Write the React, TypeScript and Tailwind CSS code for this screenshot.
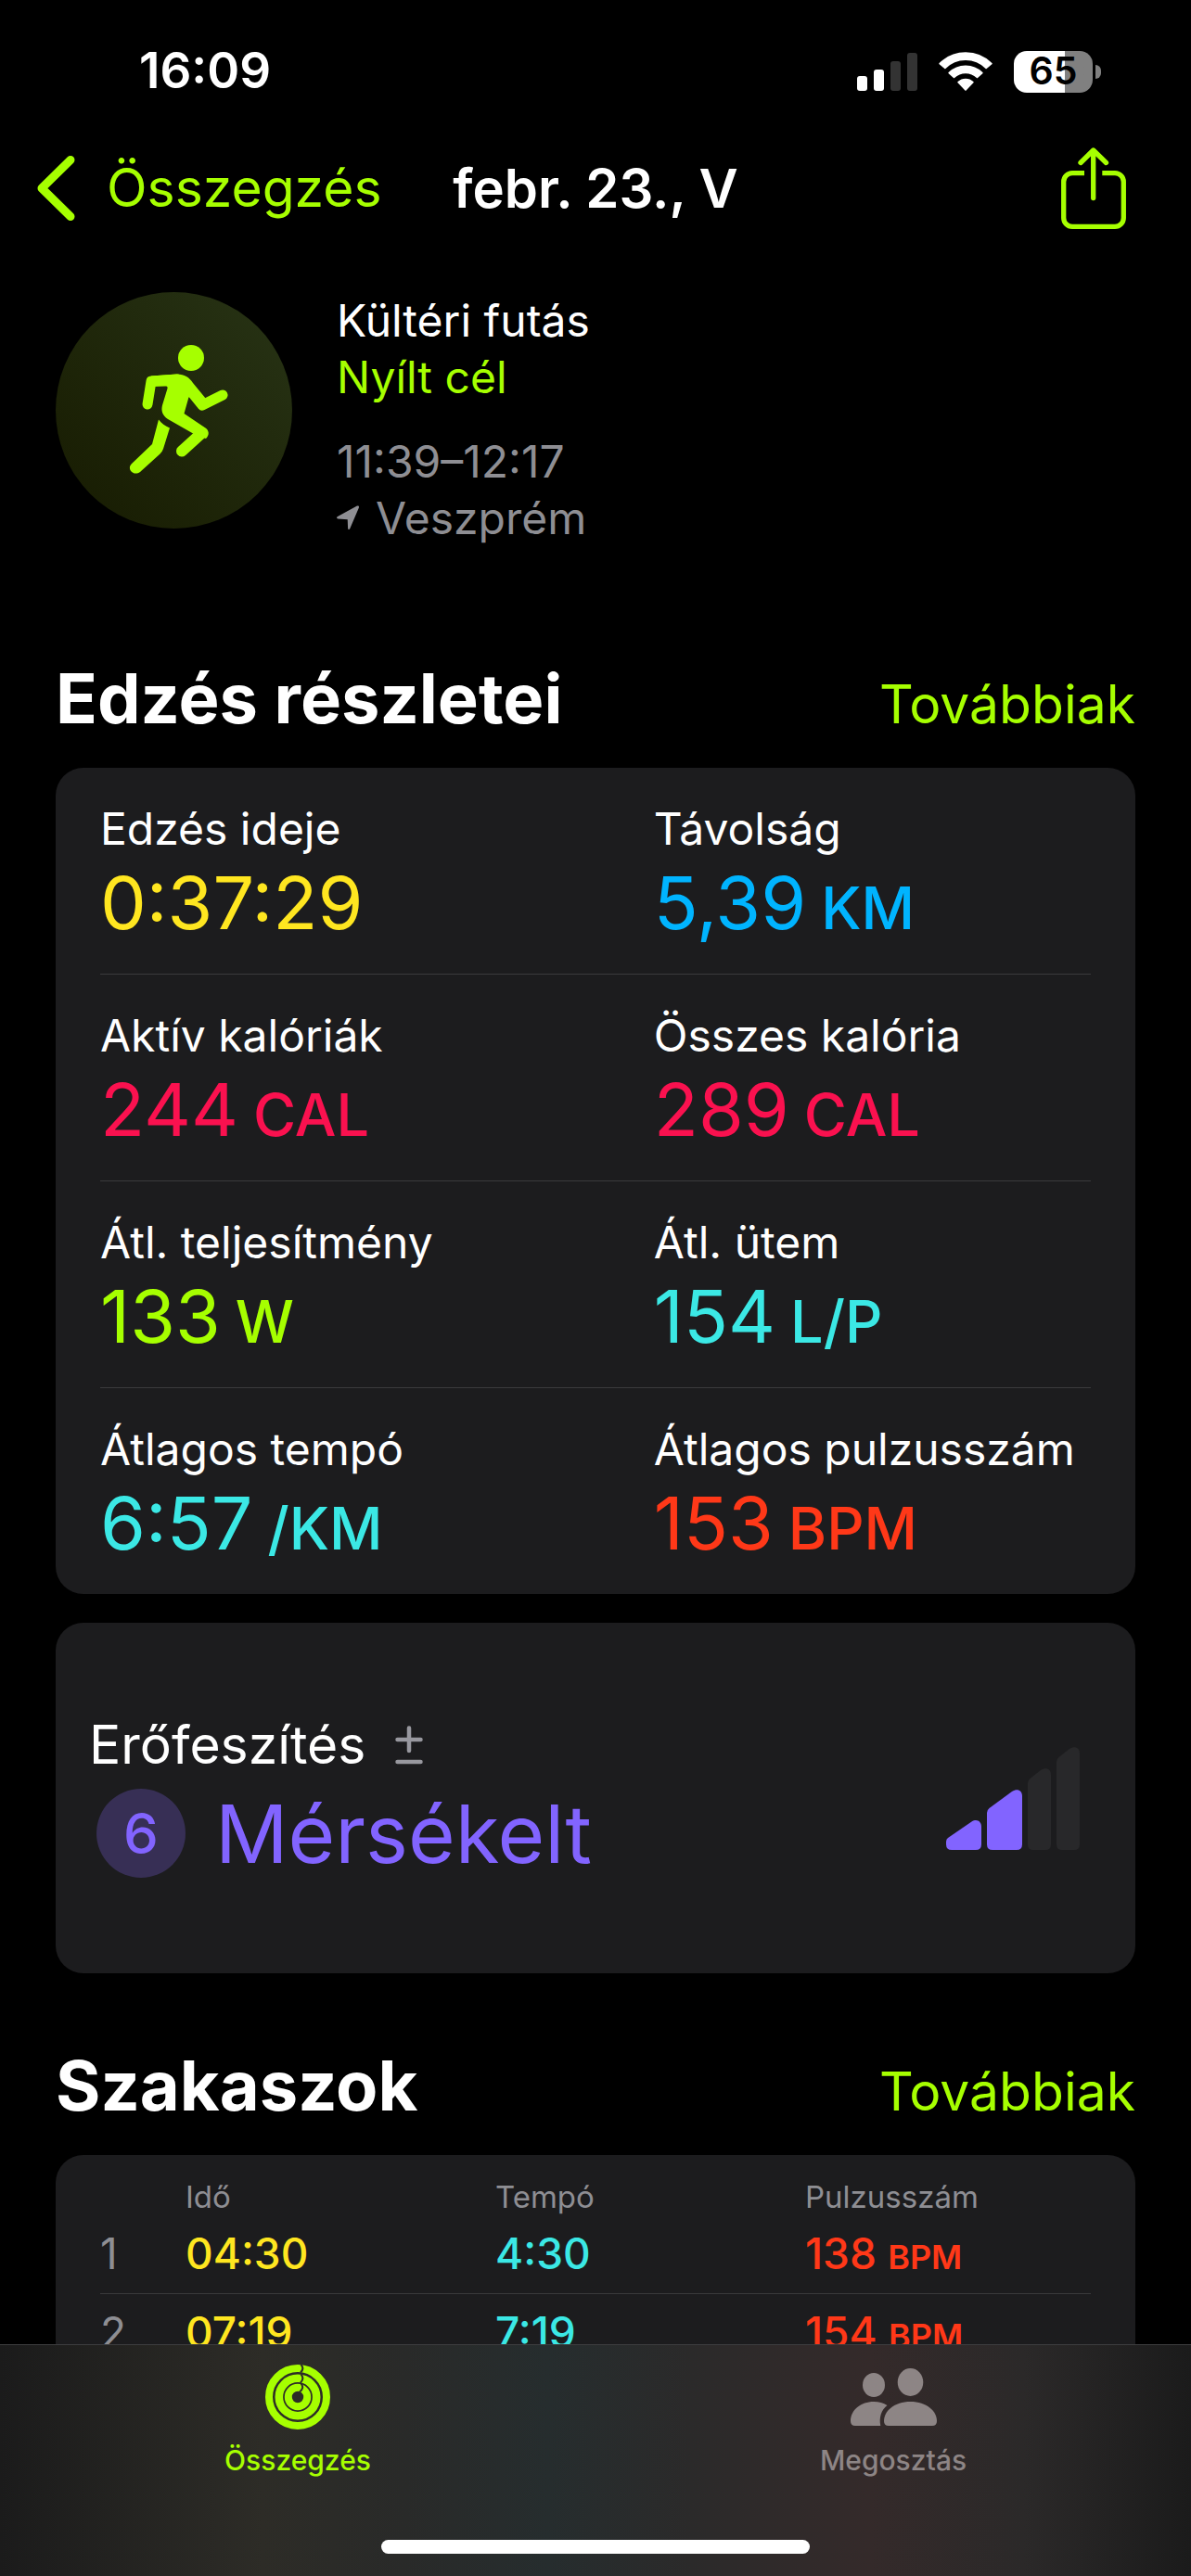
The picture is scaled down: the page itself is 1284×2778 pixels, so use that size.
import type { ReactNode } from 'react';

type Metric = {
  label: string;
  value: string;
  unit?: string;
  color: string;
};

const metrics: Metric[] = [
  { label: 'Edzés ideje', value: '0:37:29', color: 'text-[#ffe620]' },
  { label: 'Távolság', value: '5,39', unit: 'KM', color: 'text-[#00b4ff]' },
  { label: 'Aktív kalóriák', value: '244', unit: 'CAL', color: 'text-[#fa114f]' },
  { label: 'Összes kalória', value: '289', unit: 'CAL', color: 'text-[#fa114f]' },
  { label: 'Átl. teljesítmény', value: '133', unit: 'W', color: 'text-[#a6ff00]' },
  { label: 'Átl. ütem', value: '154', unit: 'L/P', color: 'text-[#3be8e5]' },
  { label: 'Átlagos tempó', value: '6:57', unit: '/KM', color: 'text-[#3be8e5]' },
  { label: 'Átlagos pulzusszám', value: '153', unit: 'BPM', color: 'text-[#ff3818]' },
];

const splits = [
  { time: '04:30', pace: '4:30', pulse: '138' },
  { time: '07:19', pace: '7:19', pulse: '154' },
];

function SignalIcon() {
  return (
    <svg className="h-[41px] w-[65px]" viewBox="0 0 65 41" fill="#fff">
      <rect x="0" y="25" width="11" height="16" rx="3" />
      <rect x="18" y="18" width="11" height="23" rx="3" />
      <rect x="36" y="9" width="11" height="32" rx="3" fill="#333" />
      <rect x="54" y="0" width="11" height="41" rx="3" fill="#333" />
    </svg>
  );
}

function WifiIcon() {
  return (
    <svg
      className="h-[42px] w-[58px]"
      viewBox="338 72 173 126"
      fill="#fff"
      stroke="#fff"
      strokeWidth="5"
      strokeLinejoin="round"
    >
      <path d="M341 110A118 118 0 0 1 508 110L491 124A94 94 0 0 0 358 124Z" />
      <path d="M371 140A76 76 0 0 1 478 140L462 154A55 55 0 0 0 387 154Z" />
      <path d="M401 170A34 34 0 0 1 448 170L424.500 195Z" />
    </svg>
  );
}

function Battery() {
  return (
    <div className="flex items-center gap-[3px]">
      <div className="flex h-[45px] w-[85px] items-center justify-center rounded-[14px] bg-linear-to-r from-white from-65% to-[#808080] to-65% text-[41px] font-semibold text-black">
        65
      </div>
      <div className="h-[15px] w-[6px] rounded-r-full bg-[#808080]" />
    </div>
  );
}

function ShareIcon() {
  return (
    <svg
      className="h-[88px] w-[70px]"
      viewBox="0 0 70 88"
      fill="none"
      stroke="currentColor"
      strokeWidth="5.300"
    >
      <path d="M25 27.700H12A9.300 9.300 0 0 0 2.700 37V76A9.300 9.300 0 0 0 12 85.300H58A9.300 9.300 0 0 0 67.300 76V37A9.300 9.300 0 0 0 58 27.700H44.300" />
      <path d="M34.700 4V54.500M21 16.500L34.700 3L48.500 16.500" strokeLinecap="round" strokeLinejoin="round" />
    </svg>
  );
}

function RunnerIcon() {
  return (
    <svg className="size-full" viewBox="0 0 255 255" fill="#a6ff00" stroke="#a6ff00" strokeLinecap="round" strokeLinejoin="round">
      <circle cx="146" cy="71" r="14" stroke="none" />
      <path d="M99 121L103 96L131 94" fill="none" strokeWidth="11" />
      <path d="M137 96L158 122L180 111" fill="none" strokeWidth="11" />
      <path
        d="M103 90.500L131 88.500C139 88.500 144 92 148 98L162 115L158 127L146 113C144.500 112 143.500 113 143 115L138.500 131L160 145.500C166 149 166 154 162 158L149 153L121 137C115 133 113.500 128 115 122L120.500 104C121 102 120 101.500 118 101.500L104 102Z"
        stroke="none"
      />
      <path d="M158 151.500L136 171.500" fill="none" strokeWidth="12" />
      <path d="M111 137.500C114 141.500 118 144.500 123 146.500L116 169Q115 172 112.500 174.500L91 194C84 199 76 191 82 185L104 164Z" stroke="none" />
    </svg>
  );
}

function LocationIcon() {
  return (
    <svg className="h-[27px] w-[24px]" viewBox="0 0 24 27" fill="currentColor">
      <path d="M1 12L22 .6C23.500 0 24.300 1 23.900 2.400L14.300 25C13.600 26.500 12.200 26.300 12.100 24.800L11.700 15.200L1.400 14.500C-.2 14.200-.3 12.700 1 12Z" />
    </svg>
  );
}

function PlusMinusIcon() {
  return (
    <svg className="h-[42px] w-[30px]" viewBox="0 0 30 42" stroke="#98989f" strokeWidth="4.500" strokeLinecap="round">
      <path d="M15 2.500V27M2.500 15H27.500M2.500 39H27.500" />
    </svg>
  );
}

function EffortBars() {
  return (
    <svg className="h-[111px] w-[144px]" viewBox="0 0 144 111">
      <g fill="#8264ff">
        <path d="M2 98L27.500 80.500C33 77 38 80 38 86V105Q38 111 32 111H6Q0 111 0 105V102Q0 99.500 2 98Z" />
        <path d="M46.500 66L71 48C77 44 82 47 82 53V105Q82 111 76 111H50Q44 111 44 105V71Q44 68 46.500 66Z" />
      </g>
      <g fill="#28282a">
        <path d="M90.500 34L102 25C108 21 113 24 113 30V105Q113 111 107 111H94Q88 111 88 105V39Q88 36 90.500 34Z" />
        <path d="M121.500 11L133 2C139-2 144 1 144 7V105Q144 111 138 111H125Q119 111 119 105V16Q119 13 121.500 11Z" />
      </g>
    </svg>
  );
}

function RingsIcon() {
  return (
    <svg className="size-[70px]" viewBox="0 0 70 70" fill="none">
      <g stroke="#a6ff00">
        <circle cx="35" cy="35" r="31" strokeWidth="8" />
        <circle cx="35" cy="35" r="20.200" strokeWidth="8.600" />
        <circle cx="35" cy="35" r="10.200" strokeWidth="8" />
      </g>
      <path
        d="M38.500 0Q42.500 4.500 38 8.500M38.500 10.500Q42.500 15 38 19.500M38.500 20.500Q42.500 25 37 29.500"
        stroke="#2c2c28"
        strokeWidth="2"
      />
    </svg>
  );
}

function PeopleIcon() {
  return (
    <svg className="h-[62px] w-[93px]" viewBox="0 0 93 62" fill="currentColor">
      <ellipse cx="25" cy="18" rx="12" ry="13" />
      <ellipse cx="64.500" cy="15" rx="13.800" ry="15" />
      <path d="M39.500 40C33 45 30.500 53 32.300 62H5Q0 62 0 57C0 45 11 36 25 36C30.500 36 35.500 37.500 39.500 40Z" />
      <path d="M41 62Q36 62 36 57C36 46 47 36 64.500 36C82 36 93 46 93 57Q93 62 88 62Z" />
    </svg>
  );
}

function SectionHeader({ title }: { title: string }) {
  return (
    <div className="mb-[29px] flex items-baseline justify-between">
      <h2 className="text-[74px] leading-[92px] font-bold">{title}</h2>
      <a href="#" className="text-[57px] leading-[72px] text-[#a6ff00]">
        Továbbiak
      </a>
    </div>
  );
}

function Card({ children, className = '' }: { children: ReactNode; className?: string }) {
  return <div className={`rounded-[30px] bg-[#1c1c1e] ${className}`}>{children}</div>;
}

function MetricCell({ label, value, unit, color }: Metric) {
  return (
    <div>
      <dt className="text-[48px] leading-[60px] whitespace-nowrap">{label}</dt>
      <dd className={`mt-1 text-[79px] leading-[90px] whitespace-nowrap ${color}`}>
        {value}
        {unit && <span className="ml-4 text-[63px] leading-none font-medium">{unit}</span>}
      </dd>
    </div>
  );
}

export default function App() {
  const rows = [0, 2, 4, 6].map((i) => metrics.slice(i, i + 2));

  return (
    <div className="flex h-screen flex-col bg-black font-['Inter',sans-serif] text-white">
      {/* Status bar */}
      <div className="flex h-[154px] shrink-0 items-center justify-between pr-[97px] pl-[150px]">
        <span className="text-[53px] font-semibold">16:09</span>
        <div className="flex items-center gap-[23px]">
          <SignalIcon />
          <WifiIcon />
          <Battery />
        </div>
      </div>

      {/* Navigation */}
      <header className="grid h-[98px] shrink-0 grid-cols-[1fr_auto_1fr] items-center px-10 text-[57px]">
        <button className="flex items-center gap-[34px] text-[#a6ff00]">
          <svg className="h-[70px] w-[41px]" viewBox="0 0 41 70" fill="none" stroke="currentColor" strokeWidth="9" strokeLinecap="round" strokeLinejoin="round">
            <path d="M36 4.500L5 35L36 65.500" />
          </svg>
          Összegzés
        </button>
        <h1 className="text-[58px] font-semibold">febr. 23., V</h1>
        <button className="mr-[30px] justify-self-end text-[#a6ff00]" aria-label="Megosztás">
          <ShareIcon />
        </button>
      </header>

      <main className="min-h-0 flex-1 overflow-hidden px-[60px] pt-[63px]">
        {/* Workout summary */}
        <section className="flex gap-12">
          <div className="size-[255px] rounded-full bg-linear-to-tr from-[#171b02] to-[#283416]">
            <RunnerIcon />
          </div>
          <div className="text-[48px] leading-[61px]">
            <p>Kültéri futás</p>
            <p className="text-[#a6ff00]">Nyílt cél</p>
            <p className="mt-[30px] text-[#8e8e93]">11:39–12:17</p>
            <p className="flex items-center gap-[18px] text-[#8e8e93]">
              <LocationIcon />
              Veszprém
            </p>
          </div>
        </section>

        <section className="mt-[118px]">
          <SectionHeader title="Edzés részletei" />
          <Card className="px-12">
            {rows.map((row) => (
              <dl
                key={row[0].label}
                className="grid grid-cols-[19fr_15fr] border-b border-[#3a3a3c] pt-9 pb-8 last:border-b-0"
              >
                {row.map((metric) => (
                  <MetricCell key={metric.label} {...metric} />
                ))}
              </dl>
            ))}
          </Card>
        </section>

        {/* Effort */}
        <Card className="mt-[31px] flex items-center justify-between py-24 pr-[60px] pl-9">
          <div>
            <div className="flex items-center gap-8 text-[57px] leading-[72px]">
              Erőfeszítés
              <PlusMinusIcon />
            </div>
            <div className="mt-1 flex h-[110px] items-center gap-8 pl-2 text-[#8264ff]">
              <span className="flex size-24 items-center justify-center rounded-full bg-[#372f55] text-[60px] font-medium">
                6
              </span>
              <span className="text-[87px] leading-none">Mérsékelt</span>
            </div>
          </div>
          <EffortBars />
        </Card>

        <section className="mt-[75px]">
          <SectionHeader title="Szakaszok" />
          <Card className="px-12 pt-6">
            <table className="w-full table-fixed text-left text-[46px] font-medium">
              <thead>
                <tr className="h-[41px] text-[33px] leading-10 text-[#8e8e93]">
                  <td className="w-[92px]" />
                  <th className="w-[334px] font-normal">Idő</th>
                  <th className="w-[334px] font-normal">Tempó</th>
                  <th className="font-normal">Pulzusszám</th>
                </tr>
              </thead>
              <tbody>
                {splits.map((split, i) => (
                  <tr key={split.time} className="h-[84px] border-b border-[#3a3a3c] last:border-b-0">
                    <td className="font-normal text-[#8e8e93]">{i + 1}</td>
                    <td className="text-[#ffe620]">{split.time}</td>
                    <td className="text-[#3be8e5]">{split.pace}</td>
                    <td className="whitespace-nowrap text-[#ff3818]">
                      {split.pulse} <span className="text-[36px] font-semibold">BPM</span>
                    </td>
                  </tr>
                ))}
              </tbody>
            </table>
          </Card>
        </section>
      </main>

      {/* Tab bar */}
      <nav className="flex shrink-0 flex-col items-center border-t border-[#3d3d3f] bg-[linear-gradient(to_right,#1b1b1b,#2d2c27_22%,#292a29_34%,#262d2e_46%,#2b2a2a_58%,#342a2a_73%,#2b2929_86%,#1b1b1b)] pt-[21px] pb-6">
        <div className="grid w-full grid-cols-2 text-[30px] leading-9 font-medium">
          <a href="#" className="flex flex-col items-center gap-[15px] text-[#a6ff00]">
            <RingsIcon />
            Összegzés
          </a>
          <a href="#" className="flex flex-col items-center gap-[15px] text-[#8d8585]">
            <span className="flex h-[70px] items-center">
              <PeopleIcon />
            </span>
            Megosztás
          </a>
        </div>
        <div className="mt-[68px] h-[15px] w-[36%] rounded-full bg-white" />
      </nav>
    </div>
  );
}
